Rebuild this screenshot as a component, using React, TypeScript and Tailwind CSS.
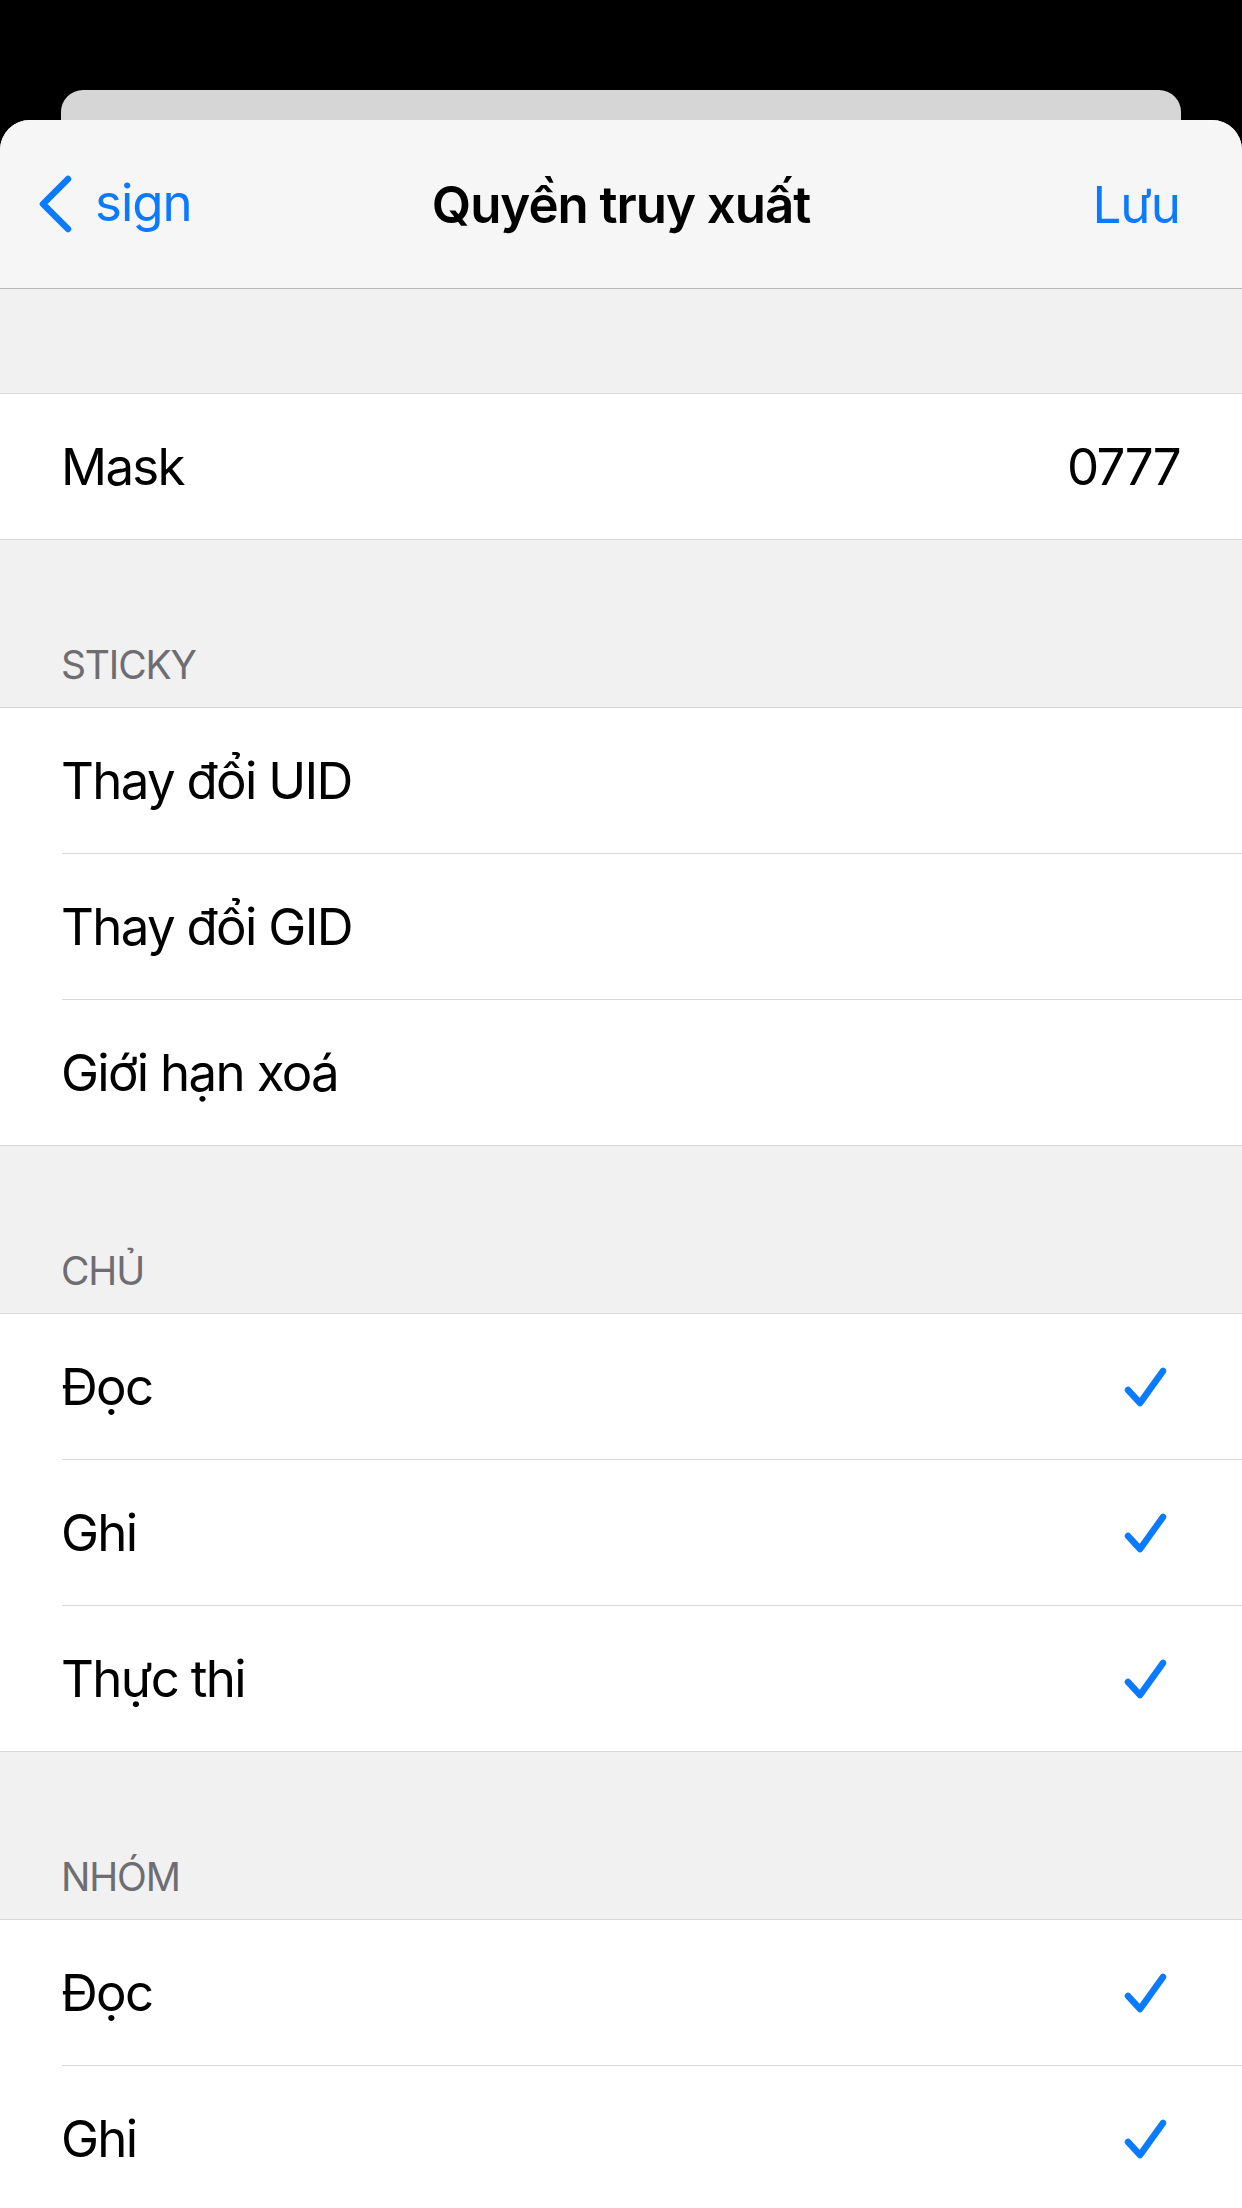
import React from "react";

const Check = () => (
	<svg width="44" height="44" viewBox="0 0 44 44" fill="none" stroke="#0a7aff" strokeWidth={6.5} strokeLinecap="round" strokeLinejoin="round">
		<path d="M5 25 L17 38 L40 6" />
	</svg>
);

const Row = ({ label, value, checked }: any) => (
	<div className="flex h-[145px] items-center justify-between pl-[61px] pr-[62px] text-[51px] leading-none tracking-[-0.033em] text-black">
		<span>{label}</span>
		{value && <span>{value}</span>}
		{checked && (
			<span className="mr-[13px] flex">
				<Check />
			</span>
		)}
	</div>
);

const Divider = () => <div className="ml-[62px] h-px bg-[#d8d8d8]" />;

const Group = ({ rows }: any) => (
	<div className="border-y border-[#d8d8d8] bg-white">
		{rows.map((r: any, i: number) => (
			<div key={i}>
				{i > 0 && <Divider />}
				<Row {...r} />
			</div>
		))}
	</div>
);

const Header = ({ title }: any) => (
	<div className="flex h-[167px] items-end pl-[61px] pr-[62px] pb-[18px] text-[39px] leading-[48px] uppercase tracking-[-0.03em] text-[#6d6d72]">
		{title}
	</div>
);

const App = () => {
	const perms = [
		{ label: "Đọc", checked: true },
		{ label: "Ghi", checked: true },
		{ label: "Thực thi", checked: true },
	];
	return (
		<div className="h-[2208px] w-[1242px] overflow-hidden bg-black pt-[90px] font-['Inter','Noto_Sans',sans-serif]">
			<div className="mx-[61px] h-[30px] rounded-t-[22px] bg-[#d6d6d6]" />
			<div className="h-[2088px] overflow-hidden rounded-t-[30px] bg-[#f1f1f1]">
				{/* nav bar */}
				<div className="grid h-[169px] grid-cols-[1fr_auto_1fr] items-center border-b border-[#b9b9b9] bg-[#f6f6f6] text-[51px] leading-none">
					<div className="flex items-center gap-[22px] pl-[37px] text-[#0a7aff] tracking-[-0.02em]">
						<svg width="36" height="58" viewBox="0 0 36 58" fill="none" stroke="#0a7aff" strokeWidth={6.5} strokeLinecap="round" strokeLinejoin="round">
							<path d="M31 4 L6 29 L31 54" />
						</svg>
						<span className="-mt-[4px]">sign</span>
					</div>
					<div className="font-semibold tracking-[-0.02em] text-black">Quyền truy xuất</div>
					<div className="flex justify-end pr-[62px] text-[#0a7aff] tracking-[-0.02em]">Lưu</div>
				</div>
				<div className="h-[104px]" />
				<Group rows={[{ label: "Mask", value: "0777" }]} />
				<Header title="Sticky" />
				<Group rows={[{ label: "Thay đổi UID" }, { label: "Thay đổi GID" }, { label: "Giới hạn xoá" }]} />
				<Header title="Chủ" />
				<Group rows={perms} />
				<Header title="Nhóm" />
				<Group rows={perms} />
			</div>
		</div>
	);
};

export default App;
